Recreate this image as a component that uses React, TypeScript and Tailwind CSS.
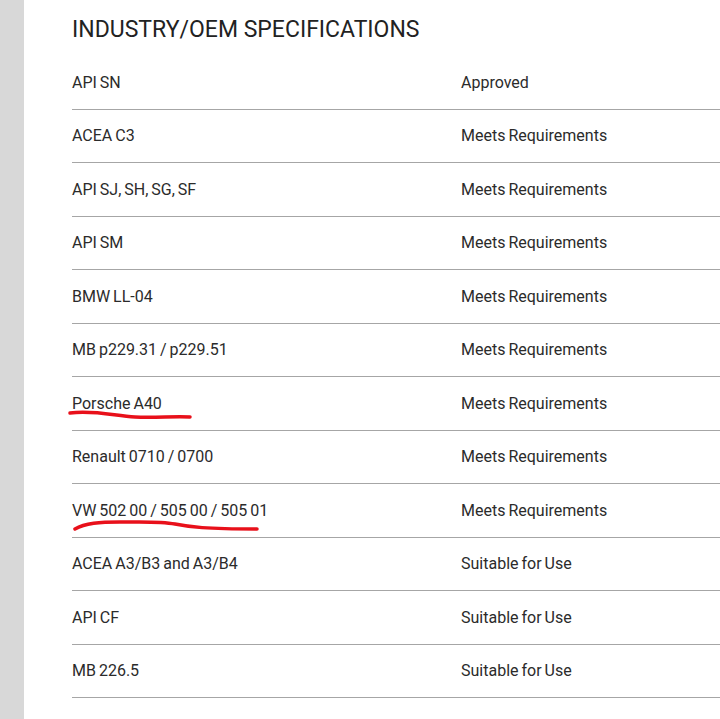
import React from "react";

const specs: [string, string][] = [
  ["API SN", "Approved"],
  ["ACEA C3", "Meets Requirements"],
  ["API SJ, SH, SG, SF", "Meets Requirements"],
  ["API SM", "Meets Requirements"],
  ["BMW LL-04", "Meets Requirements"],
  ["MB p229.31 / p229.51", "Meets Requirements"],
  ["Porsche A40", "Meets Requirements"],
  ["Renault 0710 / 0700", "Meets Requirements"],
  ["VW 502 00 / 505 00 / 505 01", "Meets Requirements"],
  ["ACEA A3/B3 and A3/B4", "Suitable for Use"],
  ["API CF", "Suitable for Use"],
  ["MB 226.5", "Suitable for Use"],
];

const font = { fontFamily: '"Liberation Sans Narrow", Roboto, "Liberation Sans", sans-serif' };

export default function App() {
  return (
    <div className="relative flex h-[719px] w-[720px] overflow-hidden bg-white text-[#2b2b2b]" style={font}>
      <div className="w-[24px] shrink-0 bg-[#d8d8d8]" />
      <div className="flex-1 pl-[48px]">
        <h2 className="mt-[15px] h-[30px] text-[23px] leading-[30px] text-[#222]">
          INDUSTRY/OEM SPECIFICATIONS
        </h2>
        <div className="mt-[11px]">
          {specs.map(([name, status]) => (
            <div
              key={name}
              className="grid h-[53.5px] grid-cols-[389px_1fr] items-center border-b border-[#a6a6a6] pt-[1px] text-[16px] [word-spacing:-1px]"
            >
              <span>{name}</span>
              <span>{status}</span>
            </div>
          ))}
        </div>
      </div>

      {/* red pen marks */}
      <svg className="pointer-events-none absolute left-0 top-0" width="720" height="719">
        <path
          d="M70 413 C 95 410, 115 416, 135 417 S 175 416, 190 417"
          fill="none"
          stroke="#e8101a"
          strokeWidth="3.5"
          strokeLinecap="round"
        />
        <path
          d="M75 529 C 85 523, 100 522, 120 522 S 160 521, 175 524 S 205 529, 257 529"
          fill="none"
          stroke="#e8101a"
          strokeWidth="3.5"
          strokeLinecap="round"
        />
      </svg>
    </div>
  );
}
